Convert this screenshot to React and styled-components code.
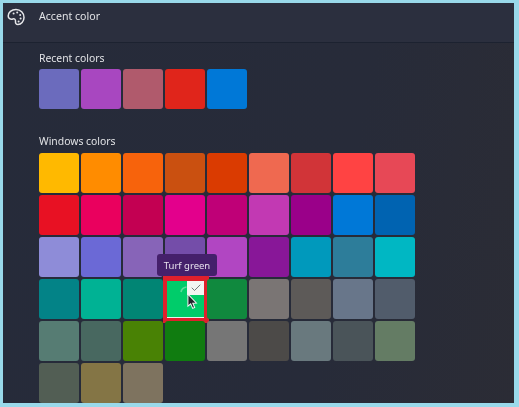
import React from "react";
import styled, { createGlobalStyle } from "styled-components";
import { Check } from "lucide-react";

const recentColors = ["#6b6bbd", "#a847c0", "#b05a6c", "#e0251b", "#0078d7"];

const windowsColors = [
  "#ffb900", "#ff8c00", "#f7630c", "#ca5010", "#da3b01", "#ef6950", "#d13438", "#ff4343", "#e74856",
  "#e81123", "#ea005e", "#c30052", "#e3008c", "#bf0077", "#c239b3", "#9a0089", "#0078d7", "#0063b1",
  "#8e8cd8", "#6b69d6", "#8764b8", "#744da9", "#b146c2", "#881798", "#0099bc", "#2d7d9a", "#00b7c3",
  "#038387", "#00b294", "#018574", "#00cc6a", "#10893e", "#7a7574", "#5d5a58", "#68768a", "#515c6b",
  "#567c73", "#486860", "#498205", "#107c10", "#767676", "#4c4a48", "#69797e", "#4a5459", "#647c64",
  "#525e54", "#847545", "#7e735f"
];

const SELECTED = 30;

const GlobalStyle = createGlobalStyle`
  html, body {
    margin: 0;
    padding: 0;
    background: #99d9ea;
  }
`;

const Frame = styled.div`
  width: 519px;
  height: 407px;
  box-sizing: border-box;
  padding: 3px 5px 4px 3px;
  background: #99d9ea;
  font-family: "Noto Sans", "Open Sans", sans-serif;
`;

const Panel = styled.div`
  height: 100%;
  overflow: hidden;
  color: #e2e3e6;
  background: linear-gradient(100deg, #262b3a 0%, #272b39 65%, #2b2c35 100%);
  filter: blur(0.35px);
`;

const Header = styled.div`
  height: 40px;
  box-sizing: border-box;
  display: flex;
  align-items: flex-start;
  padding: 4px 0 0 4px;
  gap: 14px;
  background: #2b2f3e;
  border-bottom: 1px solid #1c2230;
`;

const HeaderIcon = styled.svg`
  width: 18px;
  height: 18px;
  margin-top: 1px;
  color: #e6e7ea;
`;

const Title = styled.div`
  font-size: 10.6px;
  line-height: 18px;
`;

const Content = styled.div`
  display: flex;
  flex-direction: column;
  gap: 24px;
  padding: 7px 0 0 36px;
`;

const Section = styled.section`
  display: flex;
  flex-direction: column;
  gap: ${(p) => p.$gap}px;
`;

const SectionLabel = styled.div`
  font-size: 10.4px;
  line-height: 16px;
  height: 16px;
`;

const SwatchGrid = styled.div`
  display: grid;
  grid-template-columns: repeat(9, 40px);
  grid-auto-rows: 40px;
  gap: 2px;
`;

const Swatch = styled.div`
  position: relative;
  border-radius: 3px;
  background: ${(p) => p.$color};
`;

const SelectedRing = styled.div`
  position: absolute;
  top: -3px;
  left: -2px;
  width: 46px;
  height: 47px;
  box-sizing: border-box;
  border: 5px solid #e0202c;
  border-left-width: 4px;
`;

const WhiteLine = styled.div`
  position: absolute;
  left: 0;
  right: 0;
  bottom: 1px;
  height: 1.5px;
  background: #e8f2ec;
`;

const CheckBadge = styled.div`
  position: absolute;
  top: 2px;
  right: 1px;
  width: 17px;
  height: 14px;
  display: flex;
  align-items: center;
  justify-content: center;
  background: #f2f5f3;
  color: #555a5c;
`;

const Tooltip = styled.div`
  position: absolute;
  top: -25px;
  left: -8px;
  width: 60px;
  height: 22px;
  display: flex;
  align-items: center;
  justify-content: center;
  border-radius: 3px;
  background: #45206b;
  color: #e8e2ee;
  font-size: 9.5px;
  white-space: nowrap;
`;

const Cursor = styled.svg`
  position: absolute;
  top: 14px;
  left: 22px;
  width: 11px;
  height: 17px;
`;

const GhostArc = styled.svg`
  position: absolute;
  top: 7px;
  left: 15px;
  width: 8px;
  height: 7px;
  opacity: 0.6;
`;

export default function App() {
  return (
    <>
      <GlobalStyle />
      <Frame>
        <Panel>
          <Header>
            <HeaderIcon viewBox="0 0 18 18" fill="none" stroke="currentColor" strokeWidth="1.5" strokeLinejoin="round">
              <path d="M9 1.5 C13.5 1.5 17 5 17 9.5 C17 13.5 14 16.5 11 16.5 C9 16.5 8.3 15 8.5 13.5 C8.7 11.5 7.5 10.5 5.8 11 C3.5 11.8 1.2 10.5 1.2 8 C1.2 4.5 4.5 1.5 9 1.5 Z" />
              <g fill="currentColor" stroke="none">
                <circle cx="6.6" cy="5.4" r="1" />
                <circle cx="10.2" cy="4.6" r="1" />
                <circle cx="13.2" cy="7" r="1" />
                <circle cx="13.6" cy="10.6" r="1" />
                <circle cx="11.6" cy="13.4" r="1" />
              </g>
            </HeaderIcon>
            <Title>Accent color</Title>
          </Header>
          <Content>
            <Section $gap={3}>
              <SectionLabel>Recent colors</SectionLabel>
              <SwatchGrid>
                {recentColors.map((c) => (
                  <Swatch key={c} $color={c} />
                ))}
              </SwatchGrid>
            </Section>
            <Section $gap={4}>
              <SectionLabel>Windows colors</SectionLabel>
              <SwatchGrid>
                {windowsColors.map((c, i) => (
                  <Swatch key={c + i} $color={c}>
                    {i === SELECTED && (
                      <>
                        <WhiteLine />
                        <SelectedRing />
                        <CheckBadge>
                          <Check size={12} strokeWidth={1.6} />
                        </CheckBadge>
                        <GhostArc viewBox="0 0 8 7">
                          <path d="M1 6 C1.5 3 3.5 1.5 6.5 1" fill="none" stroke="#9fe3c0" strokeWidth="1.6" />
                        </GhostArc>
                        <Tooltip>Turf green</Tooltip>
                        <Cursor viewBox="0 0 12 18">
                          <path
                            d="M1 1 L1 14 L4 11.5 L6.2 16.5 L8.4 15.5 L6.3 10.8 L10.2 10.6 Z"
                            fill="#20242a"
                            stroke="#f4f5f6"
                            strokeWidth="1.1"
                          />
                        </Cursor>
                      </>
                    )}
                  </Swatch>
                ))}
              </SwatchGrid>
            </Section>
          </Content>
        </Panel>
      </Frame>
    </>
  );
}
